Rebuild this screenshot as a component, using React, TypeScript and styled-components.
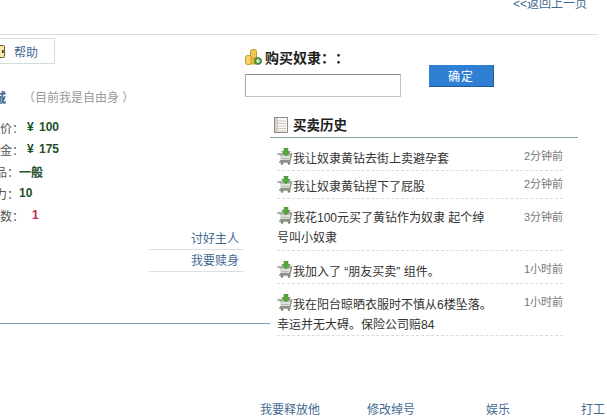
import React from 'react';
import styled, { createGlobalStyle } from 'styled-components';

const GlobalStyle = createGlobalStyle`
  html, body {
    margin: 0;
    padding: 0;
    background: #fff;
  }
  body {
    font-family: "Liberation Sans", "Noto Sans CJK SC", Arial, sans-serif;
    font-size: 12px;
    color: #333;
    text-spacing-trim: space-all;
  }
`;

const stats = [
  { label: '身价：', end: 24, value: '100', money: true },
  { label: '赎金：', end: 24, value: '175', money: true },
  { label: '人品：', end: 19, value: '一般' },
  { label: '魅力：', end: 19, value: '10' },
  { label: '次数：', end: 24, value: '1', alert: true },
];

const history = [
  { text: '我让奴隶黄钻去街上卖避孕套', time: '2分钟前', top: 11, bottom: 1 },
  { text: '我让奴隶黄钻捏下了屁股', time: '2分钟前', top: 6, bottom: 1 },
  { text: '我花100元买了黄钻作为奴隶 起个绰号叫小奴隶', time: '3分钟前', top: 11, bottom: 2, lift: true },
  { text: '我加入了 “朋友买卖” 组件。', time: '1小时前', top: 11, bottom: 1 },
  { text: '我在阳台晾晒衣服时不慎从6楼坠落。幸运并无大碍。保险公司赔84', time: '1小时前', top: 11, bottom: 0 },
];

const CartIcon = () => (
  <CartSvg viewBox="0 0 16 17" width="16" height="17">
    <path d="M0.5 6h14l-1.5 6.5H4L3 14h10.5" fill="none" stroke="#8a9488" strokeWidth="1.5" />
    <path d="M2.5 7h11l-1 1.4H3zM3.2 9.6h9l-.4 1.6H3.8z" fill="#b9c2b4" />
    <circle cx="5" cy="15.5" r="1.3" fill="#78827a" />
    <circle cx="12" cy="15.5" r="1.3" fill="#78827a" />
    <path d="M7 0h4v3.5h2.3L9 8 4.7 3.5H7z" fill="#58a83e" stroke="#3c7f2c" strokeWidth=".5" />
  </CartSvg>
);

const CoinsIcon = () => (
  <svg viewBox="0 0 17 16" width="17" height="16">
    <rect x="5.5" y="0.5" width="6" height="12" rx="2" fill="#f2c94f" stroke="#c8962a" />
    <rect x="0.5" y="6.5" width="6" height="9" rx="2" fill="#f6d566" stroke="#c8962a" />
    <rect x="6" y="9" width="5" height="6" rx="1" fill="#eebd3f" stroke="#c8962a" />
    <circle cx="13" cy="12" r="3.6" fill="#4f9a45" stroke="#2f6f2c" strokeWidth=".6" />
    <path d="M11 12h4M13 10v4" stroke="#fff" strokeWidth="1.2" />
  </svg>
);

const NoteIcon = () => (
  <NoteSvg viewBox="0 0 14 16" width="14" height="16">
    <rect x="0.5" y="0.5" width="13" height="15" fill="#fbfaf6" stroke="#8c8c8c" />
    <path d="M1 1h3v14H1z" fill="#d9cfc8" />
    <path d="M2 4h10M2 6.5h10M2 9h10M2 11.5h10M2 14h10" stroke="#cfc7c0" />
  </NoteSvg>
);

const HelpIcon = () => (
  <svg viewBox="0 0 12 13" width="12" height="13">
    <rect x="0.5" y="0.5" width="11" height="12" rx="1" fill="#f8e9a8" stroke="#5f5a3a" />
    <rect x="9" y="5" width="1.6" height="3" fill="#3f3a20" />
  </svg>
);

const App = () => {
  return (
    <Page>
      <GlobalStyle />
      <TopBar>
        <BackLink>&lt;&lt;返回上一页</BackLink>
      </TopBar>
      <Main>
        <LeftColumn>
          <HelpTab>
            <HelpIcon />
            <TabLabel>帮助</TabLabel>
          </HelpTab>
          <TitleRow>
            <Name>奴隶城</Name>
            <Status>（目前我是自由身 ）</Status>
          </TitleRow>
          <StatList>
            {stats.map((s) => (
              <StatRow key={s.label}>
                <StatLabel $end={s.end}>{s.label}</StatLabel>
                {s.money && <Yen>¥</Yen>}
                <StatValue $alert={s.alert}>{s.value}</StatValue>
              </StatRow>
            ))}
          </StatList>
          <ActionList>
            <ActionLink>讨好主人</ActionLink>
            <ActionLink>我要赎身</ActionLink>
          </ActionList>
        </LeftColumn>
        <RightColumn>
          <BuyForm>
            <BuyFields>
              <BuyTitle>
                <CoinsIcon />
                <span>购买奴隶：：</span>
              </BuyTitle>
              <BuyInput />
            </BuyFields>
            <ConfirmButton>确定</ConfirmButton>
          </BuyForm>
          <HistoryPanel>
            <HistoryTitle>
              <NoteIcon />
              <span>买卖历史</span>
            </HistoryTitle>
            {history.map((h) => (
              <HistoryRow key={h.text} $top={h.top} $bottom={h.bottom}>
                <HistoryText $lift={h.lift}>
                  <CartIcon />
                  {h.text}
                </HistoryText>
                <HistoryTime>{h.time}</HistoryTime>
              </HistoryRow>
            ))}
          </HistoryPanel>
        </RightColumn>
      </Main>
      <BottomNav>
        <NavLink>我要释放他</NavLink>
        <NavLink>修改绰号</NavLink>
        <NavLink>娱乐</NavLink>
        <NavLink>打工</NavLink>
      </BottomNav>
    </Page>
  );
};

const Page = styled.div`
  width: 607px;
  height: 419px;
  overflow: hidden;
`;

const TopBar = styled.div`
  box-sizing: border-box;
  width: 598px;
  height: 35px;
  border-bottom: 1px solid #d8dfe4;
  padding-right: 11px;
  display: flex;
  justify-content: flex-end;
  align-items: flex-start;
`;

const BackLink = styled.a`
  color: #3f6a92;
  line-height: 14px;
  margin-top: -3px;
`;

const Main = styled.div`
  display: flex;
  align-items: flex-start;
`;

const LeftColumn = styled.div`
  box-sizing: border-box;
  flex: none;
  width: 270px;
  height: 289px;
  border-bottom: 1px solid #7f9bb0;
`;

const HelpTab = styled.div`
  box-sizing: border-box;
  width: 63px;
  height: 26px;
  margin: 3px 0 0 -8px;
  border: 1px solid #d5dadd;
  display: flex;
  align-items: center;
`;

const TabLabel = styled.span`
  margin-left: 9px;
  color: #3f6a92;
`;

const TitleRow = styled.div`
  display: flex;
  align-items: center;
  height: 22px;
  margin-top: 21px;
`;

const Name = styled.div`
  width: 6px;
  flex: none;
  display: flex;
  justify-content: flex-end;
  white-space: nowrap;
  font-weight: bold;
  font-size: 13px;
  color: #3f6a92;
`;

const Status = styled.span`
  margin-left: 17px;
  color: #999;
  white-space: nowrap;
`;

const StatList = styled.div`
  margin-top: 9px;
`;

const StatRow = styled.div`
  display: flex;
  align-items: center;
  height: 22px;
`;

const StatLabel = styled.div<{ $end: number }>`
  width: ${(p) => p.$end}px;
  flex: none;
  display: flex;
  justify-content: flex-end;
  white-space: nowrap;
  color: #555;
`;

const Yen = styled.span`
  margin-left: 3px;
  width: 12px;
  font-weight: bold;
  color: #14501e;
`;

const StatValue = styled.b<{ $alert?: boolean }>`
  color: ${(p) => (p.$alert ? '#c8264f' : '#24502a')};
  margin-left: ${(p) => (p.$alert ? '8px' : '0')};
`;

const ActionList = styled.div`
  margin: 2px 0 0 149px;
  width: 95px;
`;

const ActionLink = styled.div`
  box-sizing: border-box;
  height: 22px;
  line-height: 23px;
  border-bottom: 1px solid #dcdfe0;
  padding-right: 5px;
  text-align: right;
  color: #3f6a92;
`;

const RightColumn = styled.div`
  flex: none;
  margin-left: -25px;
  width: 340px;
`;

const BuyForm = styled.div`
  display: flex;
  align-items: flex-start;
  padding-top: 14px;
`;

const BuyFields = styled.div`
  width: 156px;
`;

const BuyTitle = styled.div`
  display: flex;
  align-items: center;
  gap: 3px;
  height: 16px;
  font-size: 14px;
  font-weight: bold;
  color: #222;
  white-space: nowrap;
`;

const BuyInput = styled.input`
  display: block;
  box-sizing: border-box;
  width: 156px;
  height: 23px;
  margin-top: 9px;
  padding: 0;
  background: #fff;
  border: 1px solid #c4c4c4;
  border-top-color: #8f8f8f;
  border-left-color: #a8a8a8;
`;

const ConfirmButton = styled.button`
  box-sizing: border-box;
  width: 65px;
  height: 22px;
  margin: 16px 0 0 28px;
  padding: 0;
  border: 0;
  border-right: 1px solid #1f5c9c;
  border-bottom: 1px solid #1f5c9c;
  background: #2f7fd3;
  color: #fff;
  font: 12px "Liberation Sans", "Noto Sans CJK SC", sans-serif;
  letter-spacing: 1px;
`;

const HistoryPanel = styled.div`
  width: 308px;
  margin: 20px 0 0 25px;
`;

const HistoryTitle = styled.div`
  box-sizing: border-box;
  height: 21px;
  display: flex;
  align-items: flex-start;
  gap: 5px;
  padding-left: 4px;
  border-bottom: 1px solid #8a9ea8;
  font-size: 13.5px;
  line-height: 18px;
  font-weight: bold;
  color: #222;
`;

const NoteSvg = styled.svg`
  flex: none;
`;

const HistoryRow = styled.div<{ $top: number; $bottom: number }>`
  box-sizing: border-box;
  width: 286px;
  margin-left: 7px;
  display: flex;
  justify-content: space-between;
  align-items: flex-start;
  padding: ${(p) => p.$top}px 0 ${(p) => p.$bottom}px;
  border-bottom: 1px dashed #dcdcdc;
`;

const HistoryText = styled.div<{ $lift?: boolean }>`
  width: 218px;
  margin-top: ${(p) => (p.$lift ? '-2px' : '0')};
  line-height: 20px;
  color: #333;
`;

const CartSvg = styled.svg`
  vertical-align: 0;
  margin: -8px 0 -2px;
`;

const HistoryTime = styled.span`
  font-size: 11px;
  line-height: 14px;
  color: #777;
  white-space: nowrap;
`;

const BottomNav = styled.nav`
  display: grid;
  grid-template-columns: 107px 119px 95px auto;
  margin-top: 64px;
  padding-left: 260px;
`;

const NavLink = styled.a`
  color: #3f6a92;
  white-space: nowrap;
`;

export default App;
